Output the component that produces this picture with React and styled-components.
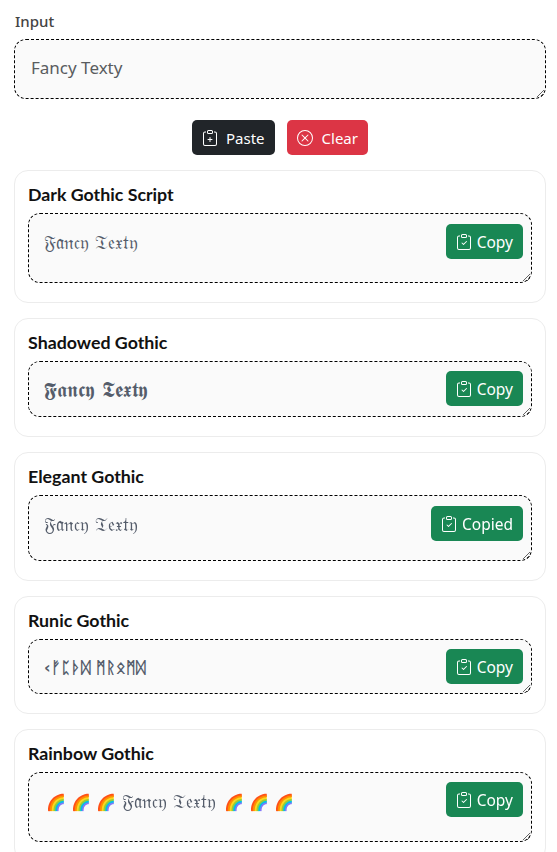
import React from "react";
import styled, { createGlobalStyle } from "styled-components";
import { BsClipboardPlus, BsClipboardCheck, BsXCircle } from "react-icons/bs";

const GlobalStyle = createGlobalStyle`
  html, body {
    margin: 0;
    padding: 0;
    background: #fff;
    overflow: hidden;
  }
  * {
    box-sizing: border-box;
  }
`;

const results = [
  { title: "Dark Gothic Script", text: "𝔉𝔞𝔫𝔠𝔶 𝔗𝔢𝔵𝔱𝔶", height: 70, size: 19, top: 11 },
  { title: "Shadowed Gothic", text: "𝕱𝖆𝖓𝖈𝖞 𝕿𝖊𝖝𝖙𝖞", height: 56, size: 21, top: 10 },
  { title: "Elegant Gothic", text: "𝔉𝔞𝔫𝔠𝔶 𝔗𝔢𝔵𝔱𝔶", height: 66, size: 19, top: 11, copied: true },
  { title: "Runic Gothic", text: "‹ᚠᛈᚦᛞ ᛗᚱᛟᛗᛞ", height: 55, size: 16, top: 10, weight: 700 },
];

const App = () => {
  return (
    <Page>
      <GlobalStyle />
      <InputLabel htmlFor="input">Input</InputLabel>
      <MainInput id="input" placeholder="Fancy Texty" />
      <Actions>
        <ActionButton $bg="#212529" $gap={8}>
          <BsClipboardPlus size={16} />
          Paste
        </ActionButton>
        <ActionButton $bg="#dc3545" $gap={9}>
          <BsXCircle size={16} />
          Clear
        </ActionButton>
      </Actions>
      <Results>
        {results.map((item) => (
          <Card key={item.title}>
            <CardTitle>{item.title}</CardTitle>
            <OutputWrap>
              <Output
                $height={item.height}
                $size={item.size}
                $weight={item.weight}
                defaultValue={item.text}
                readOnly
              />
              <CopyButton $top={item.top}>
                <BsClipboardCheck size={16} />
                {item.copied ? "Copied" : "Copy"}
              </CopyButton>
            </OutputWrap>
          </Card>
        ))}
        <Card>
          <CardTitle>Rainbow Gothic</CardTitle>
          <OutputWrap>
            <Output as="div" $height={70} $size={19}>
              <Rainbows>🌈 🌈 🌈</Rainbows> 𝔉𝔞𝔫𝔠𝔶 𝔗𝔢𝔵𝔱𝔶{" "}
              <Rainbows>🌈 🌈 🌈</Rainbows>
            </Output>
            <CopyButton $top={10}>
              <BsClipboardCheck size={16} />
              Copy
            </CopyButton>
          </OutputWrap>
        </Card>
      </Results>
    </Page>
  );
};

const Page = styled.div`
  padding: 12px 11px 0 14px;
  font-family: "Noto Sans", "Open Sans", sans-serif;
  color: #212529;
`;

const InputLabel = styled.label`
  display: block;
  height: 27px;
  padding-left: 1px;
  font-size: 15px;
  font-weight: 500;
  line-height: 18px;
  color: #444;
`;

const MainInput = styled.textarea`
  display: block;
  width: 100%;
  height: 60px;
  padding: 16px;
  border: 1px dashed #000;
  border-radius: 12px;
  background: #fafafa;
  font-family: "Noto Sans", "Open Sans", sans-serif;
  font-size: 17px;
  line-height: 24px;
  color: #555;
  outline: none;

  &::placeholder {
    color: #595c5f;
    opacity: 1;
  }
`;

const Actions = styled.div`
  display: flex;
  justify-content: center;
  gap: 12px;
  margin-top: 21px;
`;

const ActionButton = styled.button`
  display: inline-flex;
  align-items: center;
  gap: ${(p) => p.$gap}px;
  height: 35px;
  padding: 0 10px;
  border: 0;
  border-radius: 5px;
  background: ${(p) => p.$bg};
  color: #fff;
  font-family: "Noto Sans", "Open Sans", sans-serif;
  font-size: 15px;
`;

const Results = styled.div`
  display: flex;
  flex-direction: column;
  gap: 15px;
  margin-top: 15px;
`;

const Card = styled.section`
  padding: 13px 13px 19px;
  border: 1px solid #ececec;
  border-radius: 14px;
  background: #fff;
`;

const CardTitle = styled.h3`
  margin: 0 0 9px;
  font-family: "Lato", "Noto Sans", sans-serif;
  font-size: 17.8px;
  font-weight: 700;
  line-height: 20px;
  color: #111;
`;

const OutputWrap = styled.div`
  position: relative;
`;

const Output = styled.textarea`
  display: block;
  width: 100%;
  height: ${(p) => p.$height}px;
  padding: 16px 15px;
  border: 1px dashed #000;
  border-radius: 12px;
  background: #fafafa;
  font-family: "DejaVu Sans", "Noto Sans", sans-serif;
  font-size: ${(p) => p.$size}px;
  font-weight: ${(p) => p.$weight || 400};
  line-height: 24px;
  color: #555d6b;
  outline: none;
  resize: both;
  overflow: auto;
`;

const Rainbows = styled.span`
  font-size: 16px;
  padding-left: 2px;
`;

const CopyButton = styled.button`
  position: absolute;
  top: ${(p) => p.$top}px;
  right: 9px;
  display: inline-flex;
  align-items: center;
  gap: 5px;
  height: 35px;
  padding: 0 10px;
  border: 0;
  border-radius: 5px;
  background: #198754;
  color: #fff;
  font-family: "Noto Sans", "Open Sans", sans-serif;
  font-size: 15.5px;
`;

export default App;
